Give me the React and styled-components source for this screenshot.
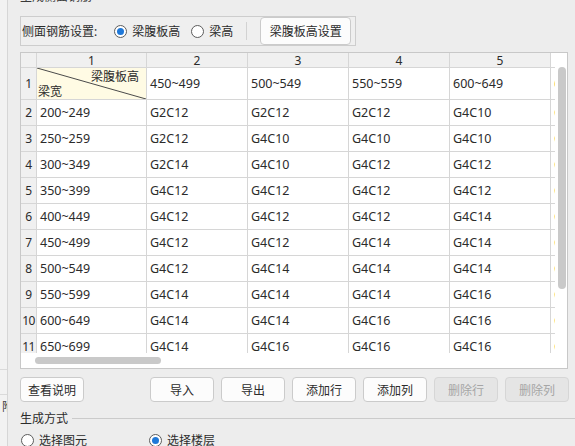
import React from "react";
import styled, { createGlobalStyle } from "styled-components";

const GlobalStyle = createGlobalStyle`
  html, body {
    margin: 0;
    padding: 0;
    background: #ededed;
  }
  body {
    font-family: "Noto Sans", "Noto Sans CJK SC", sans-serif;
    font-size: 12px;
    color: #2b2b2b;
  }
`;

const Page = styled.div`
  display: flex;
  width: 575px;
  height: 446px;
  overflow: hidden;
  background: #ededed;
`;

const LeftStrip = styled.div`
  width: 7px;
  flex: none;
  background: #f2f2f2;
  border-right: 1px solid #d6d6d6;
  display: flex;
  flex-direction: column;
  overflow: hidden;
`;

const StripRow = styled.div`
  height: ${(p) => p.$h}px;
  flex: none;
  border-bottom: ${(p) => (p.$line ? "1px solid #dadada" : "none")};
  color: #444;
  font-size: 12px;
  line-height: ${(p) => p.$h}px;
  padding-left: 2px;
  white-space: nowrap;
`;

const Main = styled.div`
  flex: 1;
  padding-left: 12px;
  display: flex;
  flex-direction: column;
`;

const Title = styled.div`
  margin-top: -11px;
  height: 16px;
  line-height: 16px;
  color: #3a3a3a;
`;

const GroupBox = styled.div`
  margin-top: 11px;
  width: 336px;
  height: 30px;
  box-sizing: border-box;
  border: 1px solid #cdcdcd;
  background: #efefef;
  display: flex;
  align-items: center;
  padding: 0 1px 0 1px;
`;

const GroupLabel = styled.span`
  margin-right: 17px;
`;

const RadioItem = styled.label`
  display: flex;
  align-items: center;
  gap: 5px;
  margin-right: ${(p) => p.$mr || 0}px;
  white-space: nowrap;
`;

const RadioCircle = styled.span`
  width: 13px;
  height: 13px;
  box-sizing: border-box;
  border-radius: 50%;
  border: 1px solid #5c5c5c;
  background: #fff;
  display: flex;
  align-items: center;
  justify-content: center;
  &::after {
    content: "";
    width: 7px;
    height: 7px;
    border-radius: 50%;
    background: ${(p) => (p.$checked ? "#1f78d8" : "transparent")};
  }
`;

const Separator = styled.span`
  width: 1px;
  height: 18px;
  background: #d2d2d2;
  margin: 0 13px 0 2px;
`;

const Button = styled.button`
  font-family: inherit;
  font-size: 12px;
  height: ${(p) => p.$h || 25}px;
  width: ${(p) => p.$w || 64}px;
  box-sizing: border-box;
  border: 1px solid ${(p) => (p.disabled ? "#d6d6d6" : "#cbcbcb")};
  border-radius: 4px;
  background: ${(p) => (p.disabled ? "#e5e5e5" : "#fcfcfc")};
  color: ${(p) => (p.disabled ? "#a6a6a6" : "#2b2b2b")};
  padding: 0;
  white-space: nowrap;
`;

const TableBox = styled.div`
  margin-top: 6px;
  width: 548px;
  height: 317px;
  box-sizing: border-box;
  border: 1px solid #c8c8c8;
  background: #fff;
  display: flex;
`;

const GridArea = styled.div`
  width: 534px;
  display: flex;
  flex-direction: column;
`;

const Viewport = styled.div`
  height: 300px;
  overflow: hidden;
`;

const Grid = styled.div`
  display: grid;
  grid-template-columns: 16px 110px repeat(4, 101px) 6px;
  grid-template-rows: 15px 32px;
  grid-auto-rows: 26px;
`;

const Cell = styled.div`
  box-sizing: border-box;
  border-right: ${(p) => (p.$open ? "none" : "1px solid #d6d6d6")};
  border-bottom: 1px solid #d6d6d6;
  background: ${(p) => (p.$gray ? "#f0f0f0" : "#fff")};
  color: ${(p) => p.$color || "#2b2b2b"};
  display: flex;
  align-items: center;
  justify-content: ${(p) => (p.$center ? "center" : "flex-start")};
  padding-left: ${(p) => (p.$center ? 0 : 3)}px;
  font-size: 12.5px;
  line-height: 14px;
  white-space: nowrap;
  overflow: hidden;
`;

const HeadCell = styled(Cell)`
  font-size: 12px;
  line-height: 13px;
`;

const NumCell = styled(Cell)`
  font-size: 12px;
  letter-spacing: -0.5px;
`;

const DiagCell = styled.div`
  position: relative;
  box-sizing: border-box;
  border-right: 1px solid #d6d6d6;
  border-bottom: 1px solid #d6d6d6;
  background: #fffbe4;
  display: flex;
  flex-direction: column;
  justify-content: space-between;
  padding: 1px 0 0 1px;
  line-height: 15px;
`;

const DiagLine = styled.svg`
  position: absolute;
  inset: 0;
  width: 100%;
  height: 100%;
`;

const DiagTop = styled.span`
  align-self: flex-end;
  margin-right: 7px;
`;

const DiagBottom = styled.span`
  align-self: flex-start;
`;

const HScroll = styled.div`
  height: 15px;
  position: relative;
`;

const HThumb = styled.div`
  position: absolute;
  left: 14px;
  top: 4px;
  width: 126px;
  height: 7px;
  border-radius: 4px;
  background: #c9c9c9;
`;

const VScroll = styled.div`
  width: 12px;
  position: relative;
`;

const VThumb = styled.div`
  position: absolute;
  left: 3px;
  top: 14px;
  width: 8px;
  height: 222px;
  border-radius: 4px;
  background: #c9c9c9;
`;

const ButtonRow = styled.div`
  margin-top: 8px;
  width: 549px;
  display: flex;
  justify-content: space-between;
`;

const ButtonGroup = styled.div`
  display: flex;
  gap: 7px;
`;

const SectionHead = styled.div`
  margin-top: 8px;
  height: 16px;
  display: flex;
  align-items: center;
`;

const SectionLine = styled.div`
  flex: 1;
  height: 1px;
  background: #cbcbcb;
  margin-left: 4px;
`;

const RadioRow = styled.div`
  margin-top: 6px;
  height: 16px;
  display: flex;
  align-items: center;
  padding-left: 1px;
`;

const headRow = ["450~499", "500~549", "550~559", "600~649"];

const rows = [
  ["200~249", "G2C12", "G2C12", "G2C12", "G4C10"],
  ["250~259", "G2C12", "G4C10", "G4C10", "G4C10"],
  ["300~349", "G2C14", "G4C10", "G4C12", "G4C12"],
  ["350~399", "G4C12", "G4C12", "G4C12", "G4C12"],
  ["400~449", "G4C12", "G4C12", "G4C12", "G4C14"],
  ["450~499", "G4C12", "G4C12", "G4C14", "G4C14"],
  ["500~549", "G4C12", "G4C14", "G4C14", "G4C14"],
  ["550~599", "G4C14", "G4C14", "G4C14", "G4C16"],
  ["600~649", "G4C14", "G4C14", "G4C16", "G4C16"],
  ["650~699", "G4C14", "G4C16", "G4C16", "G4C16"],
];

const Radio = ({ checked, children, mr }) => (
  <RadioItem $mr={mr}>
    <RadioCircle $checked={checked} />
    <span>{children}</span>
  </RadioItem>
);

const App = () => (
  <>
    <GlobalStyle />
    <Page>
      <LeftStrip>
        <StripRow $h={369} $line />
        <StripRow $h={24} $line />
        <StripRow $h={24}>附</StripRow>
      </LeftStrip>
      <Main>
        <Title>生成侧面钢筋</Title>
        <GroupBox>
          <GroupLabel>侧面钢筋设置:</GroupLabel>
          <Radio checked mr={11}>梁腹板高</Radio>
          <Radio mr={11}>梁高</Radio>
          <Separator />
          <Button $w={91} $h={28}>梁腹板高设置</Button>
        </GroupBox>

        <TableBox>
          <GridArea>
            <Viewport>
              <Grid>
                <HeadCell $gray />
                {["1", "2", "3", "4", "5"].map((c) => (
                  <HeadCell key={c} $gray $center>{c}</HeadCell>
                ))}
                <HeadCell $open />

                <NumCell $gray $center>1</NumCell>
                <DiagCell>
                  <DiagLine viewBox="0 0 100 100" preserveAspectRatio="none">
                    <line x1="0" y1="0" x2="100" y2="100" stroke="#4a4a4a" strokeWidth="1" vectorEffect="non-scaling-stroke" />
                  </DiagLine>
                  <DiagTop>梁腹板高</DiagTop>
                  <DiagBottom>梁宽</DiagBottom>
                </DiagCell>
                {headRow.map((v, i) => (
                  <Cell key={i}>{v}</Cell>
                ))}
                <Cell $open $color="#f2a33a">650~699</Cell>

                {rows.map((r, ri) => (
                  <React.Fragment key={ri}>
                    <NumCell $gray $center>{ri + 2}</NumCell>
                    {r.map((v, ci) => (
                      <Cell key={ci}>{v}</Cell>
                    ))}
                    <Cell $open $color="#f2a33a">G4C16</Cell>
                  </React.Fragment>
                ))}
              </Grid>
            </Viewport>
            <HScroll>
              <HThumb />
            </HScroll>
          </GridArea>
          <VScroll>
            <VThumb />
          </VScroll>
        </TableBox>

        <ButtonRow>
          <Button>查看说明</Button>
          <ButtonGroup>
            <Button>导入</Button>
            <Button>导出</Button>
            <Button>添加行</Button>
            <Button>添加列</Button>
            <Button disabled>删除行</Button>
            <Button disabled>删除列</Button>
          </ButtonGroup>
        </ButtonRow>

        <SectionHead>
          <span>生成方式</span>
          <SectionLine />
        </SectionHead>
        <RadioRow>
          <Radio mr={62}>选择图元</Radio>
          <Radio checked>选择楼层</Radio>
        </RadioRow>
      </Main>
    </Page>
  </>
);

export default App;
